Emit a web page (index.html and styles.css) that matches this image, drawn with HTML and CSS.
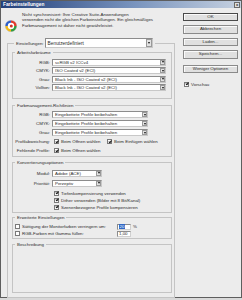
FILE: index.html
```html
<!DOCTYPE html>
<html lang="de">
<head>
  <meta charset="UTF-8" />
  <title>Farbeinstellungen</title>
  <link rel="stylesheet" href="styles.css">
</head>
<body>
  <div class="window">
    <div class="titlebar">
      <span class="title">Farbeinstellungen</span>
      <span class="close">x</span>
    </div>

    <div class="content">
      <div class="main">
        <div class="notice">
          <svg class="logo" viewBox="0 0 12 12">
            <circle cx="6" cy="6" r="5.6" fill="#fff" stroke="#9a9a9a" stroke-width="0.5"/>
            <path d="M6 1.6 A4.4 4.4 0 0 1 10.4 6" stroke="#e23a2c" stroke-width="2.4" fill="none"/>
            <path d="M10.4 6 A4.4 4.4 0 0 1 6 10.4" stroke="#2f9c3e" stroke-width="2.4" fill="none"/>
            <path d="M6 10.4 A4.4 4.4 0 0 1 1.6 6" stroke="#f2b915" stroke-width="2.4" fill="none"/>
            <path d="M1.6 6 A4.4 4.4 0 0 1 6 1.6" stroke="#2d5ec9" stroke-width="2.4" fill="none"/>
            <circle cx="6.3" cy="6" r="1.5" fill="#d23228"/>
          </svg>
          <p>Nicht synchronisiert: Ihre Creative Suite-Anwendungen<br>verwenden nicht die gleichen Farbeinstellungen. Ein gleichmäßiges<br>Farbmanagement ist daher nicht gewährleistet.</p>
        </div>

        <fieldset class="outer">
          <legend class="settings">
            <label>Einstellungen:</label>
            <div class="select big">Benutzerdefiniert<b class="arrow"></b></div>
          </legend>

          <fieldset class="group spaces">
            <legend>Arbeitsfarbräume</legend>
            <div class="rows">
              <label>RGB:</label><div class="select w114">scRGB v2 ICCv4<b class="arrow"></b></div>
              <label>CMYK:</label><div class="select w114">ISO Coated v2 (ECI)<b class="arrow"></b></div>
              <label>Grau:</label><div class="select w114">Black Ink - ISO Coated v2 (ECI)<b class="arrow"></b></div>
              <label>Vollton:</label><div class="select w114">Black Ink - ISO Coated v2 (ECI)<b class="arrow"></b></div>
            </div>
          </fieldset>

          <fieldset class="group policies">
            <legend>Farbmanagement-Richtlinien</legend>
            <div class="rows">
              <label>RGB:</label><div class="select w96">Eingebettete Profile beibehalten<b class="arrow"></b></div>
              <label>CMYK:</label><div class="select w96">Eingebettete Profile beibehalten<b class="arrow"></b></div>
              <label>Grau:</label><div class="select w96">Eingebettete Profile beibehalten<b class="arrow"></b></div>
              <label>Profilabweichung:</label>
              <div class="opts">
                <span class="opt first"><span class="cb on"></span>Beim Öffnen wählen</span>
                <span class="opt"><span class="cb on"></span>Beim Einfügen wählen</span>
              </div>
              <label>Fehlende Profile:</label>
              <div class="opts">
                <span class="opt"><span class="cb on"></span>Beim Öffnen wählen</span>
              </div>
            </div>
          </fieldset>

          <fieldset class="group convert">
            <legend>Konvertierungsoptionen</legend>
            <div class="rows">
              <label>Modul:</label><div class="select w50">Adobe (ACE)<b class="arrow"></b></div>
              <label>Priorität:</label><div class="select w50">Perzeptiv<b class="arrow"></b></div>
            </div>
            <div class="checks">
              <div class="opt"><span class="cb on"></span>Tiefenkompensierung verwenden</div>
              <div class="opt"><span class="cb on"></span>Dither verwenden (Bilder mit 8 Bit/Kanal)</div>
              <div class="opt"><span class="cb on"></span>Szenenbezogene Profile kompensieren</div>
            </div>
          </fieldset>

          <fieldset class="group advanced">
            <legend>Erweiterte Einstellungen</legend>
            <div class="opt">
              <span class="cb"></span>
              <span class="adv-label">Sättigung der Monitorfarben verringern um:</span>
              <span class="field"><span class="sel">20</span></span>
              <span class="unit">%</span>
            </div>
            <div class="opt">
              <span class="cb"></span>
              <span class="adv-label">RGB-Farben mit Gamma füllen:</span>
              <span class="field">1,00</span>
            </div>
          </fieldset>

          <fieldset class="group desc">
            <legend>Beschreibung</legend>
            <div class="desc-body"></div>
          </fieldset>
        </fieldset>
      </div>

      <div class="side">
        <div class="btn default">OK</div>
        <div class="btn">Abbrechen</div>
        <div class="btn">Laden...</div>
        <div class="btn">Speichern...</div>
        <div class="btn more">Weniger Optionen</div>
        <div class="opt preview"><span class="cb on"></span>Vorschau</div>
      </div>
    </div>
  </div>
</body>
</html>
```

FILE: styles.css
```css
* {
  box-sizing: border-box;
}
html, body {
  margin: 0;
}
body {
  width: 242px;
  height: 300px;
  overflow: hidden;
  background: #d9d9d9;
  font-family: "Liberation Sans", Arial, sans-serif;
  font-size: 4.4px;
  line-height: 5px;
  color: #2b2b2b;
}
.window {
  width: 242px;
  height: 298px;
  border: 1px solid #5e5e5e;
  background: #ececec;
}
.titlebar {
  height: 7px;
  display: flex;
  align-items: center;
  justify-content: space-between;
  padding: 0 1px 0 2px;
  background: linear-gradient(to right, #23407a, #7893bd 55%, #c6d1e0);
}
.title {
  color: #fff;
  font-weight: bold;
  font-size: 4.8px;
}
.close {
  width: 6px;
  height: 6px;
  background: #dedede;
  border: 1px solid #6a6a6a;
  font-size: 4px;
  line-height: 3.5px;
  text-align: center;
  font-weight: bold;
  color: #222;
}
.content {
  display: flex;
  gap: 8px;
  padding: 4px 3px 0 6px;
}
.main {
  width: 168px;
}
.notice {
  display: flex;
  gap: 5px;
  margin-left: -2px;
}
.logo {
  width: 12px;
  height: 12px;
  margin-top: 8px;
  flex: none;
}
.notice p {
  margin: 0;
  line-height: 5.3px;
  white-space: nowrap;
}

fieldset {
  margin: 0;
  min-width: 0;
  border: 1px solid #c4c4c4;
}
legend {
  padding: 0 2px;
  white-space: nowrap;
}
.outer {
  margin-top: 6px;
  padding: 0 2px 4px 4px;
}
.settings {
  display: flex;
  align-items: center;
  gap: 1px;
  margin-left: 2px;
  height: 10px;
}
.group {
  padding: 3px 2px 2px 2px;
}
.spaces {
  margin-top: 2px;
  padding-top: 3.5px;
  padding-bottom: 7px;
}
.policies {
  margin-top: 4px;
  padding-top: 3px;
  padding-bottom: 2px;
}
.convert {
  margin-top: 3px;
  padding-top: 4.5px;
  padding-bottom: 1px;
}
.advanced {
  margin-top: 2px;
  padding-top: 3.5px;
  padding-bottom: 1px;
}
.desc {
  margin-top: 3px;
}
.desc-body {
  height: 40px;
}

.rows {
  display: grid;
  grid-template-columns: 35px auto;
  column-gap: 2px;
  row-gap: 1.5px;
  align-items: center;
}
.policies .rows {
  row-gap: 2px;
}
.convert .rows {
  row-gap: 3px;
}
.rows label {
  text-align: right;
  white-space: nowrap;
}

.select {
  display: flex;
  align-items: center;
  height: 7px;
  padding-left: 2px;
  background: #fff;
  border: 1px solid #8c8c8c;
  border-right-color: #c8c8c8;
  border-bottom-color: #c8c8c8;
  white-space: nowrap;
}
.select.big {
  width: 108px;
  height: 10px;
  font-size: 4.8px;
}
.w114 { width: 114px; }
.w96 { width: 96px; }
.w50 { width: 50px; }
.arrow {
  margin-left: auto;
  width: 5px;
  height: 5px;
  background: #e2e2e2;
  border: 0.5px solid #9a9a9a;
  display: flex;
  align-items: center;
  justify-content: center;
}
.arrow::after {
  content: "";
  border-top: 2px solid #111;
  border-left: 1.5px solid transparent;
  border-right: 1.5px solid transparent;
}
.big .arrow {
  width: 6px;
  height: 8px;
}

.opts {
  display: flex;
  height: 7px;
  align-items: center;
}
.opt {
  display: flex;
  align-items: center;
  height: 7px;
  white-space: nowrap;
}
.opts .opt {
  margin-left: 2px;
}
.opt.first {
  width: 51px;
}
.cb {
  position: relative;
  flex: none;
  width: 5px;
  height: 5px;
  margin-right: 2px;
  background: #fff;
  border: 1px solid #7a7a7a;
}
.cb.on::after {
  content: "";
  position: absolute;
  left: 0.8px;
  top: -0.3px;
  width: 1.2px;
  height: 2.4px;
  border: solid #111;
  border-width: 0 1px 1px 0;
  transform: rotate(40deg);
}
.checks {
  margin-top: 3px;
  padding-left: 39px;
}
.adv-label {
  width: 95px;
}
.field {
  display: flex;
  align-items: center;
  width: 14px;
  height: 6px;
  padding-left: 1px;
  background: #fff;
  border: 1px solid #8c8c8c;
  border-right-color: #d0d0d0;
  border-bottom-color: #d0d0d0;
}
.sel {
  background: #3168c6;
  color: #fff;
  padding: 0 0.5px;
}
.unit {
  margin-left: 2px;
}

.side {
  width: 55px;
  padding-top: 0.5px;
  display: flex;
  flex-direction: column;
}
.btn {
  height: 8.5px;
  margin-bottom: 4px;
  text-align: center;
  line-height: 6.5px;
  background: #e0e0e0;
  border: 1px solid #8a8a8a;
  box-shadow: inset 1px 1px 0 #fafafa;
}
.btn.default {
  border-color: #4a4a4a;
}
.btn.more {
  margin-top: 2px;
}
.preview {
  margin-top: 3.5px;
  margin-left: 1px;
}
```
